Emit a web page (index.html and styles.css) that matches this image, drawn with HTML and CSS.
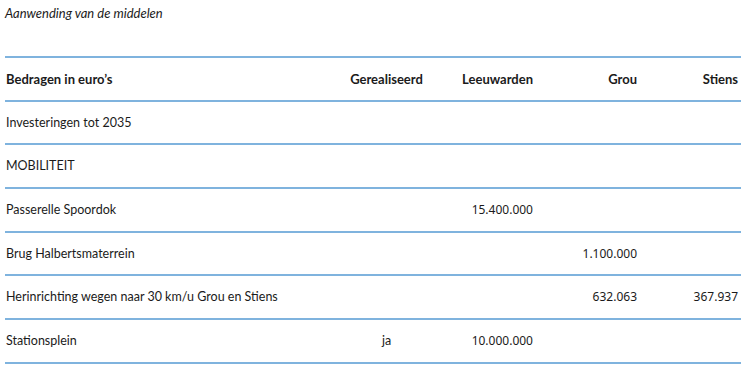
FILE: index.html
```html
<!DOCTYPE html>
<html lang="nl">
<head>
<meta charset="utf-8">
<link rel="stylesheet" href="styles.css">
</head>
<body>
<div class="page">
  <p class="caption">Aanwending van de middelen</p>
  <table class="funds">
    <colgroup>
      <col class="c-name"><col class="c-real"><col class="c-lwd"><col class="c-grou"><col class="c-stiens">
    </colgroup>
    <thead>
      <tr>
        <th class="name">Bedragen in euro’s</th>
        <th class="center">Gerealiseerd</th>
        <th class="num">Leeuwarden</th>
        <th class="num">Grou</th>
        <th class="num">Stiens</th>
      </tr>
    </thead>
    <tbody>
      <tr><td class="name">Investeringen tot 2035</td><td></td><td></td><td></td><td></td></tr>
      <tr><td class="name">MOBILITEIT</td><td></td><td></td><td></td><td></td></tr>
      <tr><td class="name">Passerelle Spoordok</td><td></td><td class="num">15.400.000</td><td></td><td></td></tr>
      <tr><td class="name">Brug Halbertsmaterrein</td><td></td><td></td><td class="num">1.100.000</td><td></td></tr>
      <tr><td class="name">Herinrichting wegen naar 30 km/u Grou en Stiens</td><td></td><td></td><td class="num">632.063</td><td class="num">367.937</td></tr>
      <tr><td class="name">Stationsplein</td><td class="center">ja</td><td class="num">10.000.000</td><td></td><td></td></tr>
    </tbody>
  </table>
</div>
</body>
</html>
```
FILE: styles.css
```css
html, body {
  margin: 0;
  padding: 0;
  background: #ffffff;
}
body {
  font-family: Lato, "Noto Sans", sans-serif;
  color: #1b1b1b;
  font-size: 13px;
}
.page {
  padding: 0 6px 0 5px;
}
.caption {
  margin: 0;
  padding-top: 5px;
  height: 56px;
  box-sizing: border-box;
  font-style: italic;
  line-height: 16px;
}
.funds {
  width: 736px;
  border-collapse: collapse;
  table-layout: fixed;
}
.c-name { width: 330px; }
.c-real { width: 105px; }
.c-lwd { width: 96px; }
.c-grou { width: 104px; }
.c-stiens { width: 101px; }
.funds tr {
  height: 43.7px;
}
.funds th, .funds td {
  border-top: 2px solid #7fb3de;
  border-bottom: 2px solid #7fb3de;
  padding: 0 3px 0 1px;
  vertical-align: middle;
  line-height: 16px;
}
.funds th {
  font-weight: 700;
}
.funds td {
  font-size: 12.5px;
}
.name { text-align: left; }
.center { text-align: center; }
.funds td.num {
  text-align: right;
  font-family: "Noto Sans", sans-serif;
  font-size: 12px;
}
th.num {
  text-align: right;
}
```
